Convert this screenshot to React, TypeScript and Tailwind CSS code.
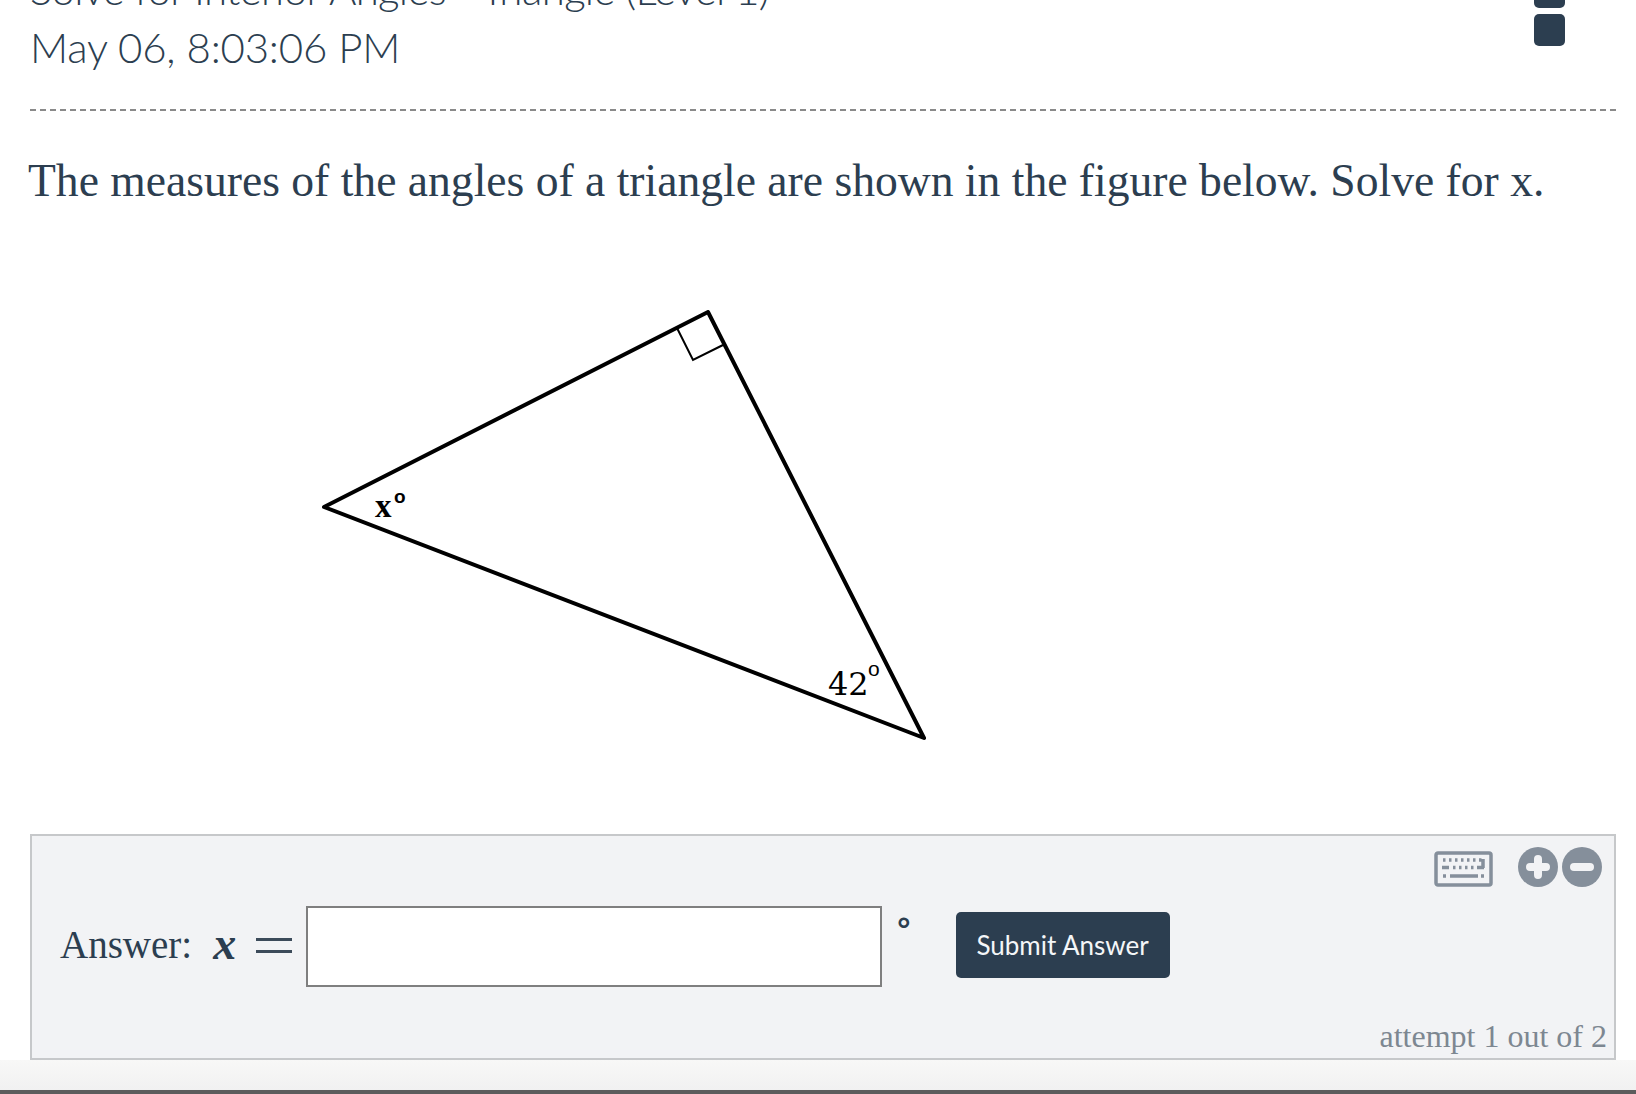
const App = () => {
  return (
    <div className="h-[1094px] overflow-hidden bg-white flex flex-col text-[#2c3e50]">
      {/* Header, scrolled partly out of view */}
      <header className="ml-[30px] mr-[20px] h-[111px] border-b-2 border-dashed border-[#8a8a8a] flex justify-between shrink-0">
        <div className="-mt-[40px] text-[42px] leading-[58px] font-light font-['Lato',sans-serif]">
          <div className="tracking-[-0.7px]">Solve for Interior Angles - Triangle (Level 1)</div>
          <div className="tracking-[-0.2px]">May 06, 8:03:06 PM</div>
        </div>
        <div className="-mt-[19px] mr-[51px] flex flex-col gap-[6px]">
          <div className="w-[31px] h-[27px] rounded-[5px] bg-[#2c3e50]" />
          <div className="w-[31px] h-[32px] rounded-[5px] bg-[#2c3e50]" />
        </div>
      </header>

      {/* Question */}
      <p className="mt-[40px] ml-[28px] text-[45.6px] leading-[60px] whitespace-nowrap font-['Liberation_Serif',serif]">
        The measures of the angles of a triangle are shown in the figure below. Solve for x.
      </p>

      {/* Figure */}
      <div className="mt-[99px] mb-[90px] ml-[320px] h-[434px] shrink-0">
        <svg width="620" height="434" viewBox="320 310 620 434" className="block">
          <path d="M324 507 L708 312 L924 738 Z" fill="none" stroke="#000" strokeWidth="4" strokeLinejoin="round" />
          <path d="M677 328 L693 360 L723 345" fill="none" stroke="#000" strokeWidth="2" />
          <text x="375" y="517" fontFamily="Liberation Serif, serif" fontWeight="700" fontSize="33" fill="#000">x</text>
          <text x="394" y="503" fontFamily="Liberation Sans, sans-serif" fontWeight="700" fontSize="19" fill="#000">o</text>
          <text x="828" y="695" fontFamily="DejaVu Serif, serif" fontSize="32" fill="#000">42</text>
          <text x="868" y="676" fontFamily="Liberation Sans, sans-serif" fontSize="21" fill="#000">o</text>
        </svg>
      </div>

      {/* Answer panel */}
      <section className="ml-[30px] mr-[20px] h-[226px] border-2 border-[#c6c8ca] bg-[#f2f3f5] shrink-0 flex flex-col">
        <div className="mt-[11px] mr-[12px] flex justify-end items-center">
          <svg width="60" height="36" viewBox="0 0 60 36" className="mr-[24px] mt-[3px]">
            <rect x="2" y="2" width="55" height="32" rx="2" fill="none" stroke="#858f9b" strokeWidth="3.5" />
            <path d="M9 9h2.5M15 9h2.5M21 9h2.5M27 9h2.5M33 9h2.5M39 9h2.5M45 9h2.5M8 16.5h7M19 16.5h2.5M25 16.5h2.5M31 16.5h2.5M37 16.5h2.5M43 16.5h7M49 8v9M9 25h3M16 25h28M47 25h3" stroke="#858f9b" strokeWidth="3.5" fill="none" />
          </svg>
          <svg width="84" height="40" viewBox="0 0 84 40">
            <circle cx="20" cy="20" r="20" fill="#858f9b" />
            <circle cx="64" cy="20" r="20" fill="#858f9b" />
            <path d="M20 12v16M12 20h16" stroke="#f2f3f5" strokeWidth="8" strokeLinecap="round" />
            <path d="M56 20h16" stroke="#f2f3f5" strokeWidth="8" strokeLinecap="round" />
          </svg>
        </div>

        <div className="mt-[19px] flex items-start">
          <div className="ml-[28px] w-[246px] h-[81px] flex items-center text-[39px] font-['Liberation_Serif',serif]">
            <span className="-mt-[3px]">Answer:</span>
            <span className="ml-[21px] -mt-[6px] italic font-bold text-[46px] leading-[46px] font-['Liberation_Serif',serif]">x</span>
            <span className="ml-[20px] -mt-[2px] h-[15px] w-[36px] border-y-[3px] border-[#3c4b5a]" />
          </div>
          <div className="w-[576px] h-[81px] bg-white border-2 border-[#7f7f7f]" />
          <span className="ml-[15px] mt-[3px] text-[34px] leading-[40px] font-['Liberation_Sans',sans-serif] font-bold">°</span>
          <button className="ml-[45px] mt-[6px] w-[214px] h-[66px] rounded-[5px] bg-[#2c3e50] text-[#f4f6f8] text-[26px] font-['Lato',sans-serif]">
            Submit Answer
          </button>
        </div>

        <div className="mt-auto mr-[7px] mb-[2px] text-right text-[32px] leading-[40px] text-[#7d8791] font-['Liberation_Serif',serif]">
          attempt 1 out of 2
        </div>
      </section>

      {/* Bottom edge of the window */}
      <div className="flex-1 bg-gradient-to-b from-[#f8f8f7] to-[#f1f1f1] border-b-4 border-[#5c5c5c]" />
    </div>
  );
};

export default App;
